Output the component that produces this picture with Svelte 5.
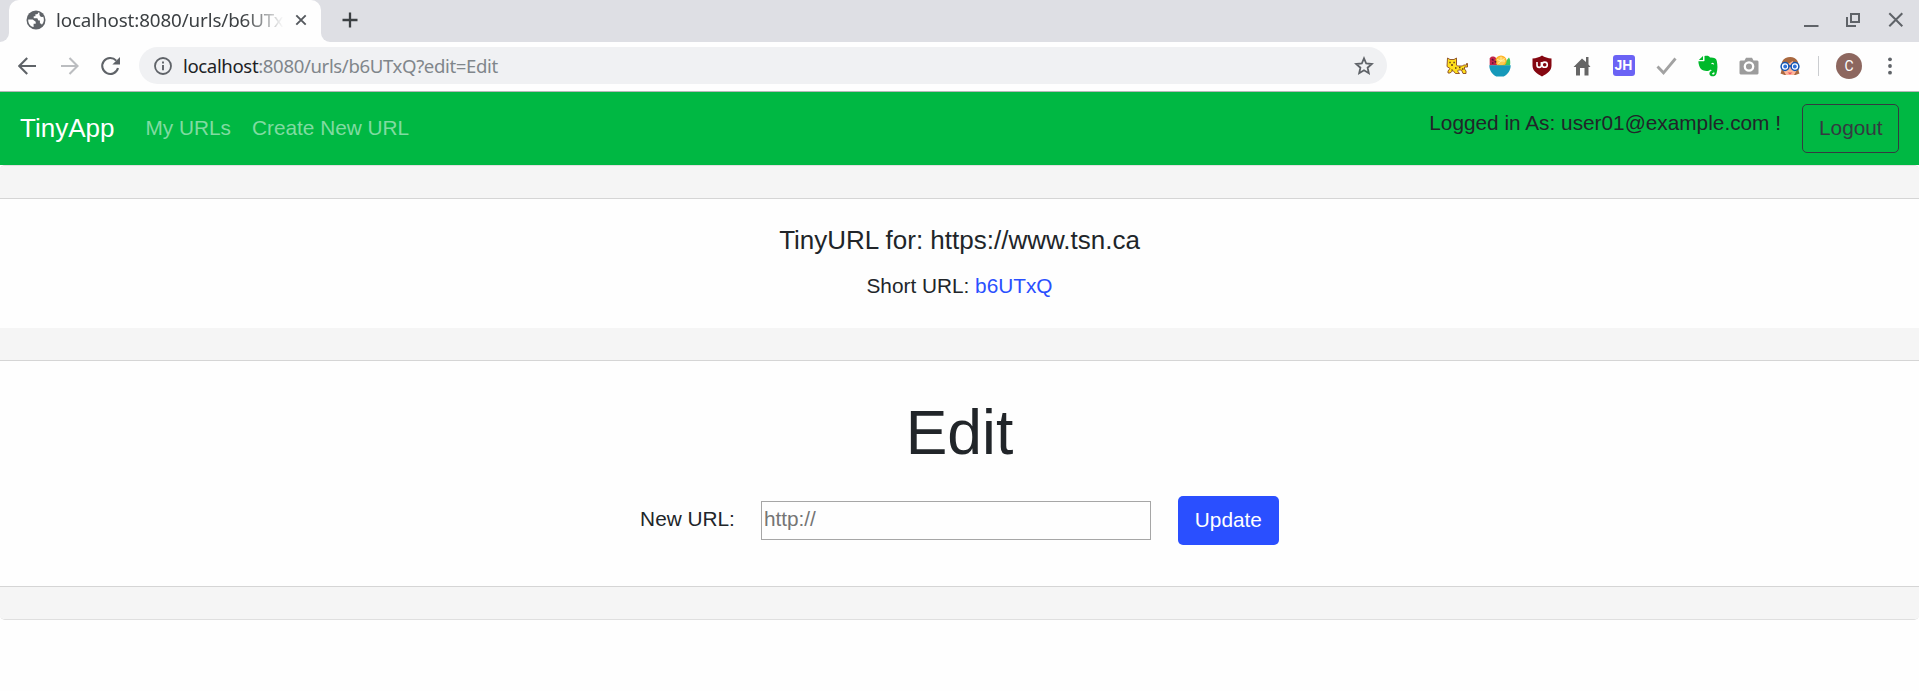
<script lang="ts">
  const links = ['My URLs', 'Create New URL'];
</script>

<svelte:head><title>TinyApp</title></svelte:head>

<div class="window">
  <div class="tabbar">
    <div class="lead"></div>
    <div class="tab">
      <svg class="globe" width="20" height="20" viewBox="0 0 20 20"><circle cx="10" cy="10" r="9.5" fill="#5f6368"/><path d="M2.2 9.5h4.500l3 2.200v2.100H7.600v3.300C4.300 16.400 2 13.500 2.200 9.500zM12.200 2.400c-.2 1.600-1.200 1.900-2.800 1.800v2.100H7.700v1.900h3.600l1.100 2.400h1.500v2.700c1 .2 1.700.7 2 1.400 2.200-2.300 2.500-5.400 1.300-8.200-.9.9-2.200.7-3-.2-.7-1.100-1-2-.6-3.500z" fill="#fff"/></svg>
      <span class="title">localhost:8080/urls/b6UTx</span>
      <svg class="close" width="12" height="12" viewBox="0 0 12 12"><path d="M1.3 1.3l9.400 9.400M10.700 1.300l-9.400 9.400" stroke="#55595e" stroke-width="1.9"/></svg>
    </div>
    <div class="foot"></div>
    <svg class="plus" width="16" height="16" viewBox="0 0 16 16"><path d="M8 .5v15M.5 8h15" stroke="#3c4043" stroke-width="2.3"/></svg>
    <svg class="controls" width="100" height="20" viewBox="0 0 100 20"><g fill="none" stroke="#5f6368" stroke-width="2"><path d="M0 16h14.500"/><path d="M47 4h8v8h-8zM43 7v9h9"/><path d="M85.300 3.300l13 13M98.300 3.300l-13 13"/></g></svg>
  </div>

  <div class="toolbar">
    <svg class="nav-icons" width="105" height="22" viewBox="0 0 105 22"><g fill="none" stroke-width="2.1"><path d="M18 11H2M9.200 3L1.200 11l8 8" stroke="#5f6368"/><path d="M43 11h16M51.500 3l8 8-8 8" stroke="#bbbdc0"/><path d="M98.200 5.600A8 8 0 1 0 100 13" stroke="#5f6368"/></g><path d="M102 2v7.600h-7.600z" fill="#5f6368"/></svg>
    <div class="omnibox">
      <svg width="18" height="18" viewBox="0 0 18 18"><circle cx="9" cy="9" r="8" fill="none" stroke="#5f6368" stroke-width="1.8"/><path d="M9 8v5.300M9 4.600v2" stroke="#5f6368" stroke-width="1.9"/></svg>
      <span class="address"><b>localhost</b>:8080/urls/b6UTxQ?edit=Edit</span>
      <svg class="star" width="20" height="20" viewBox="0 0 20 20"><path d="M10 2.300l2.200 5.200 5.600.5-4.200 3.700 1.200 5.500-4.800-2.900-4.800 2.900 1.200-5.500L2.200 8l5.600-.5z" fill="none" stroke="#5f6368" stroke-width="1.8"/></svg>
    </div>
    <div class="extensions">
      <svg width="22" height="18" viewBox="0 0 22 18"><path d="M1.500 1l2.500 1.500h4L10.500 1v7l1 1h5l1-1h3V6.500h1V10h-3v2l1.500 2v2.500H17L15.500 13h-3l-1 1 2 2.500h-4L7 13.500l-3 2.500H2v-2l2-2.500-3-2z" fill="#ffe01b" stroke="#8a4a22" stroke-width=".9"/><path d="M3.300 5.500h1.400M7.400 5.500h1.400M5 8h2M9 11h1.500M13 10.500h1.500M16 12h1.500M5.500 13h1" stroke="#5d3a20" stroke-width="1.400"/></svg>
      <svg width="22" height="22" viewBox="0 0 22 22"><path d="M.7 10.500V3.500C2 1 5 1 7 3l4 7.500z" fill="#c2264c"/><path d="M13 10.500L20 2.500c1.300 1.500 1.500 5 1 8z" fill="#3fc75c"/><circle cx="12" cy="6" r="5.600" fill="#ffb11f"/><circle cx="12" cy="6" r="4.300" fill="#ffc94f"/><path d="M12 6L8 4.500M12 6V1.700M12 6l3.700-2.500M12 6h4.300M12 6l-3.500 3" stroke="#fff0a8" stroke-width=".9"/><path d="M3 4l1.500 1.500M6 6l1 1.500M3 8h1.500" stroke="#5e1136" stroke-width="1.500"/><path d="M.3 10.200h21.400c0 5.500-3.200 9.300-7 11.300H7.300c-3.800-2-7-5.800-7-11.300z" fill="#1699ba"/></svg>
      <svg width="20" height="22" viewBox="0 0 20 22"><path d="M10 .5c2.500 1.700 6 2.800 9.500 3v7c0 5-4 8-9.500 11-5.500-3-9.500-6-9.500-11v-7c3.500-.2 7-1.300 9.500-3z" fill="#850711"/><path d="M5 7v3.200a2.200 2.200 0 0 0 4.400 0V7" fill="none" stroke="#fff" stroke-width="1.600"/><circle cx="12.700" cy="9.700" r="2.600" fill="none" stroke="#fff" stroke-width="1.600"/></svg>
      <svg width="18" height="20" viewBox="0 0 18 20"><path d="M13 1h2.500v7.500L17.500 11h-2v8.500h-4V12H7v7.500H3V11H.5L9 2.500l4 3.500z" fill="#666"/></svg>
      <span class="jh">JH</span>
      <svg width="21" height="20" viewBox="0 0 21 20"><path d="M1.500 10.500l6 6.300L19.500 2.500" fill="none" stroke="#a2a2a2" stroke-width="2.800"/></svg>
      <svg width="20" height="22" viewBox="0 0 20 22"><path d="M6.500 1c2.500-.8 4.800-.3 5.500 1.500 3.500-.2 6.300.5 6.800 3.500 1 5 .8 9-.3 12.500-.8 3.300-5.500 3.700-6.700 1.500-1.200-2.700.6-4.800 3.700-4v2c-1.700-.2-2 1.400-.5 1.600 1.600.2 1.900-1.600 1-2.600-1-1.100-3-1-3.800-2.500-.8 1.800-4.500 1.800-6.500 1.100C2 14.600.5 10 .4 6.300h5.100c.8 0 1-.3 1-1z" fill="#00b92b"/><path d="M.8 4.900L5 .9v4z" fill="#00b92b"/><path d="M13.500 8.800q1.700-1 2.200.6" fill="none" stroke="#fff" stroke-width="1.100"/></svg>
      <svg width="20" height="18" viewBox="0 0 20 18"><path d="M1.500 3.500h4L7 .7h6l1.500 2.800h4l1 1v12l-1 1h-17l-1-1v-12z" fill="#9c9c9c"/><circle cx="10" cy="9.500" r="4.200" fill="none" stroke="#fff" stroke-width="2.300"/></svg>
      <svg width="20" height="20" viewBox="0 0 20 20"><path d="M.5 17.500C2.500 14 .5 8 2.500 5 5 .2 14.500-.8 17.500 5c2 3.500 0 9 2 12.500l-4 1.500h-11z" fill="#a9683f"/><path d="M2.500 8.500Q10 8 12.500 5q1.500 3 5 3.500V13l-3.500 6H6l-3.500-6z" fill="#ffb69b"/><path d="M7.500 16.500h5L10 18.500z" fill="#eb5063"/><g fill="#fff" stroke="#1556b1" stroke-width="1.500"><circle cx="5" cy="10.500" r="3.900"/><circle cx="15" cy="10.500" r="3.900"/></g><path d="M8.700 10h2.600" stroke="#1556b1" stroke-width="1.500"/><circle cx="5.200" cy="10.500" r="1.900" fill="#2d70da"/><circle cx="14.800" cy="10.500" r="1.900" fill="#2d70da"/></svg>
    </div>
    <span class="divider"></span>
    <span class="avatar">C</span>
    <svg class="dots" width="4" height="18" viewBox="0 0 4 18"><g fill="#5f6368"><circle cx="2" cy="2.300" r="1.900"/><circle cx="2" cy="9" r="1.900"/><circle cx="2" cy="15.700" r="1.900"/></g></svg>
  </div>

  <nav>
    <a class="brand" href="#urls">TinyApp</a>
    {#each links as label}<a class="link" href="#urls">{label}</a>{/each}
    <span class="user">Logged in As: user01@example.com !</span>
    <button class="logout">Logout</button>
  </nav>

  <main>
    <div class="strip"></div>
    <section class="summary">
      <h5>TinyURL for: https://www.tsn.ca</h5>
      <p>Short URL: <a href="#short">b6UTxQ</a></p>
    </section>
    <div class="strip middle"></div>
    <section class="edit">
      <h1>Edit</h1>
      <form onsubmit={(e) => e.preventDefault()}>
        <label for="url">New URL:</label>
        <input id="url" placeholder="http://" />
        <button class="update">Update</button>
      </form>
    </section>
    <div class="strip last"></div>
  </main>
</div>

<style>
  :global(body) { margin: 0; background: #fefefe; }
  * { box-sizing: border-box; }
  svg { display: block; flex: none; }
  a { text-decoration: none; }
  .window { height: 691px; overflow: hidden; color: #212529; font: 20.8px/1.5 "Liberation Sans", Arial, sans-serif; }
  .tabbar { height: 42px; background: #dedfe4; display: flex; align-items: flex-start; }
  .lead, .foot { width: 9px; height: 42px; background: linear-gradient(#dedfe4 50%, #fefefe 50%); flex: none; }
  .lead::before, .foot::before { content: ""; display: block; height: 42px; background: #dedfe4; border-bottom-right-radius: 9px; }
  .foot::before { border-radius: 0 0 0 9px; }
  .tab { height: 42px; width: 312px; background: #fefefe; border-radius: 10px 10px 0 0; display: flex; align-items: center; padding: 0 0 2px 17px; }
  .title { margin-left: 10px; width: 230px; white-space: nowrap; font: 18.8px/30px "Noto Sans", sans-serif; letter-spacing: -.12px; color: #3c4043; -webkit-mask-image: linear-gradient(90deg, #000 82%, transparent 99%); mask-image: linear-gradient(90deg, #000 82%, transparent 99%); }
  .close { margin-left: 9px; }
  .plus { margin: 12px 0 0 12px; }
  .controls { margin: 10px 15px 0 auto; }
  .toolbar { height: 50px; display: flex; align-items: center; border-bottom: 1px solid #b5b7b8; padding: 0 27px 2px 18px; }
  .nav-icons { margin-right: 16px; }
  .omnibox { width: 1248px; height: 37px; border-radius: 19px; background: #f0f1f3; display: flex; align-items: center; padding: 0 13px 0 15px; }
  .address { margin-left: 11px; white-space: nowrap; color: #80868b; font: 18.6px/30px "Noto Sans", sans-serif; letter-spacing: -.37px; }
  .address b { color: #202124; font-weight: 400; }
  .star { margin-left: auto; }
  .extensions { margin-left: 59px; width: 354px; display: flex; align-items: center; justify-content: space-between; }
  .jh { width: 22px; height: 21px; border-radius: 3px; background: #6b63f5; color: #fff; font: bold 14px/21px "Liberation Sans", sans-serif; text-align: center; }
  .divider { width: 1px; height: 20px; background: #cbcdd0; margin-left: 18px; }
  .avatar { width: 26px; height: 26px; border-radius: 50%; background: #8d675f; color: #fff; font: 14px/26px Roboto, sans-serif; text-align: center; margin-left: 17px; }
  .dots { margin-left: auto; }
  nav { height: 73px; background: #00b843; padding: 0 20px; display: flex; align-items: center; white-space: nowrap; }
  .brand { color: #fff; font-size: 26px; margin-right: 31px; }
  .link { color: #80dba1; margin: 0 21px 2px 0; }
  .user { align-self: flex-start; margin: 15px 21px 0 auto; }
  button { font: 20.8px/30px "Liberation Sans", Arial, sans-serif; height: 49px; border-radius: 5px; padding: 0 16px 1px; }
  .logout { width: 97px; background: transparent; border: 1px solid #343a40; color: #343a40; }
  main { border: 1px solid #dfdfdf; border-width: 1px 0; border-radius: 5px; overflow: hidden; height: 455px; text-align: center; }
  .strip { height: 33px; background: #f5f5f5; border-bottom: 1px solid #d5d5d5; }
  .last { border-bottom: 0; border-top: 1px solid #d5d5d5; }
  .summary { height: 129px; padding-top: 26px; }
  h5 { margin: 0 0 14px; font-size: 26px; line-height: 31px; font-weight: 400; }
  p { margin: 0; line-height: 31px; }
  p a { color: #2a4fff; }
  .edit { height: 225px; padding-top: 34px; }
  h1 { margin: 0; font-size: 62.4px; line-height: 75px; font-weight: 400; }
  form { margin-top: 26px; display: flex; align-items: center; justify-content: center; }
  label { margin: 0 26px 3px 0; }
  input { width: 390px; height: 39px; padding: 0 2px 3px; border: 1px solid #a6a6a6; border-radius: 0; background: #fefefe; font: 20.8px "Liberation Sans", sans-serif; margin-right: 27px; }
  input::placeholder { color: #757575; }
  .update { width: 101px; border: 0; color: #fff; background: #2a4fff; }
</style>
